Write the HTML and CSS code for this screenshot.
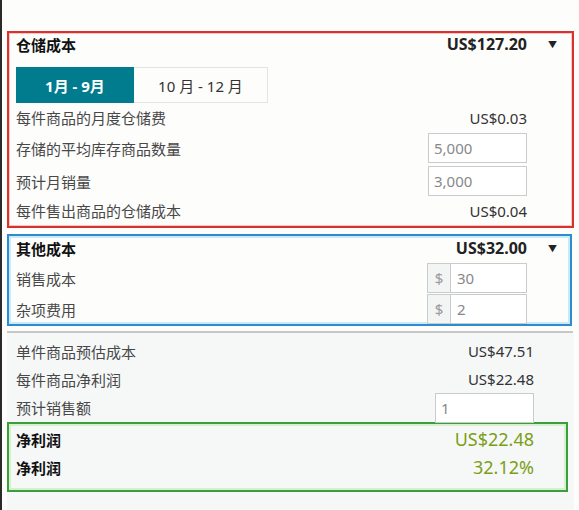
FILE: index.html
```html
<!DOCTYPE html>
<html lang="zh-CN">
<head>
    <meta charset="UTF-8">
    <meta name="viewport" content="width=device-width, initial-scale=1.0">
    <title>费用计算</title>
    <link rel="stylesheet" href="styles.css">
</head>
<body>
    <div class="page">
        <div class="box box-red">
            <div class="row head">
                <span class="label">仓储成本</span>
                <span class="value">US$127.20</span>
                <span class="caret">&#9660;</span>
            </div>
            <div class="toggle">
                <span class="tab active">1月 - 9月</span>
                <span class="tab">10 月 - 12 月</span>
            </div>
            <div class="row">
                <span class="label">每件商品的月度仓储费</span>
                <span class="value">US$0.03</span>
            </div>
            <div class="row row-input first">
                <span class="label">存储的平均库存商品数量</span>
                <input class="field" type="text" value="5,000">
            </div>
            <div class="row row-input">
                <span class="label">预计月销量</span>
                <input class="field" type="text" value="3,000">
            </div>
            <div class="row">
                <span class="label">每件售出商品的仓储成本</span>
                <span class="value">US$0.04</span>
            </div>
        </div>

        <div class="box box-blue">
            <div class="row head">
                <span class="label">其他成本</span>
                <span class="value">US$32.00</span>
                <span class="caret">&#9660;</span>
            </div>
            <div class="row row-input first">
                <span class="label">销售成本</span>
                <div class="money">
                    <span class="addon">$</span>
                    <input type="text" value="30">
                </div>
            </div>
            <div class="row row-input">
                <span class="label">杂项费用</span>
                <div class="money">
                    <span class="addon">$</span>
                    <input type="text" value="2">
                </div>
            </div>
        </div>

        <div class="divider"></div>

        <div class="summary">
            <div class="row">
                <span class="label">单件商品预估成本</span>
                <span class="value">US$47.51</span>
            </div>
            <div class="row">
                <span class="label">每件商品净利润</span>
                <span class="value">US$22.48</span>
            </div>
            <div class="row row-input">
                <span class="label">预计销售额</span>
                <input class="field" type="text" value="1">
            </div>
            <div class="box box-green">
                <div class="row">
                    <span class="label strong">净利润</span>
                    <span class="value profit">US$22.48</span>
                </div>
                <div class="row">
                    <span class="label strong">净利润</span>
                    <span class="value profit">32.12%</span>
                </div>
            </div>
        </div>
    </div>
</body>
</html>
```

FILE: styles.css
```css
body {
    margin: 0;
    font-family: "Noto Sans", "Noto Sans CJK SC", sans-serif;
    font-size: 15px;
    color: #484848;
    background: #fdfdfc;
}
.page {
    border-left: 2px solid #2a2a2a;
    min-height: 510px;
    box-sizing: border-box;
    padding: 31px 5px 0 5px;
}
.box {
    border: 2px solid;
    padding: 0 45px 0 7px;
}
.box-red {
    border-color: #d8322e;
    box-shadow: inset 0 0 0 1px #f4c7c2;
    padding-bottom: 1px;
}
.box-blue {
    border-color: #2f8bd0;
    box-shadow: inset 0 0 0 2px #c7ecf8;
    margin-top: 6px;
    margin-right: 2px;
    padding-right: 43px;
}
.box-green {
    border-color: #3a9f3a;
    box-shadow: inset 0 0 0 2px #d4f0cf;
    margin: 0 -34px 0 -9px;
    padding: 1px 32px 9px 7px;
}
.row {
    display: flex;
    align-items: center;
    height: 29px;
}
.label {
    flex: 1;
    white-space: nowrap;
}
.value {
    color: #333;
}
.head {
    height: 22px;
    margin-right: -45px;
}
.box-blue .head {
    height: 24px;
    margin-right: -43px;
}
.head .label {
    font-weight: bold;
    color: #111;
}
.head .value {
    font-weight: bold;
    font-size: 16px;
    color: #222;
}
.caret {
    width: 45px;
    box-sizing: border-box;
    padding-left: 21px;
    font-size: 9px;
    color: #222;
}
.box-blue .caret {
    width: 43px;
}
.toggle {
    display: flex;
    width: 252px;
    height: 36px;
    margin-top: 12px;
    border: 1px solid #e2e5e5;
    box-sizing: border-box;
}
.tab {
    flex: 1;
    display: flex;
    align-items: center;
    justify-content: center;
    color: #333;
}
.tab.active {
    flex: 0 0 118px;
    margin: -1px 0 -1px -1px;
    background: #007c8e;
    color: #fff;
    font-weight: bold;
}
.row-input {
    height: 30px;
    margin-top: 3px;
}
.row-input.first {
    margin-top: 1px;
}
.box-blue .row-input.first {
    margin-top: 3px;
}
.box-blue .row-input {
    margin-top: 1px;
}
.field {
    width: 99px;
    height: 30px;
    box-sizing: border-box;
    border: 1px solid #c9cccc;
    padding: 0 5px;
    font: inherit;
    color: #888;
    background: #fff;
}
.money {
    display: flex;
    width: 100px;
    height: 30px;
    box-sizing: border-box;
    border: 1px solid #c9cccc;
    background: #fff;
}
.addon {
    width: 22px;
    display: flex;
    align-items: center;
    justify-content: center;
    background: #f3f4f4;
    border-right: 1px solid #c9cccc;
    color: #999;
}
.money input {
    flex: 1;
    width: 0;
    border: none;
    padding: 0 6px;
    font: inherit;
    color: #888;
}
.divider {
    height: 2px;
    margin: 5px 1px 0 0;
    background: #c6c8c8;
}
.summary {
    background: #f6f8f8;
    padding: 4px 40px 18px 9px;
}
.summary .row {
    height: 28px;
}
.summary .row-input {
    height: 29px;
    margin-top: 0;
}
.summary .field {
    height: 30px;
    margin-bottom: -1px;
}
.box-green .row {
    height: 28px;
}
.strong {
    font-weight: bold;
    color: #111;
}
.profit {
    font-size: 18px;
    color: #7b9e17;
}
```
